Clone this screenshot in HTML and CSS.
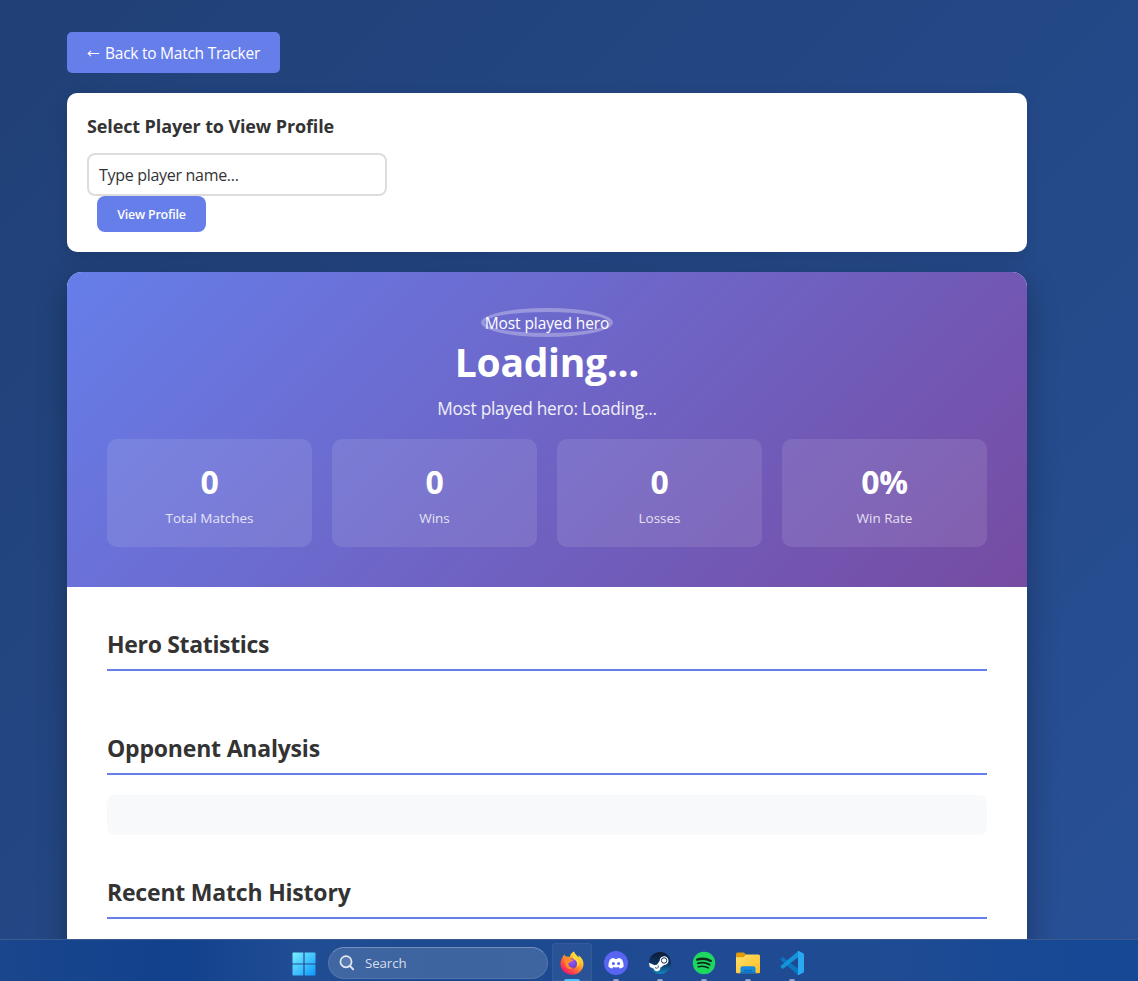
FILE: index.html
```html
<!DOCTYPE html>
<html lang="en">
<head>
<meta charset="utf-8">
<title>Player Profile</title>
<link rel="stylesheet" href="styles.css">
</head>
<body>
<div class="desktop">
  <main class="page">
    <a class="back"><svg class="arrow" width="13" height="10" viewBox="0 0 13 10"><path d="M12.2 5.5H1.2M4 2.8L1.2 5.5L4 8.2" fill="none" stroke="#fff" stroke-width="1.1"/></svg><span>Back to Match Tracker</span></a>
    <section class="card picker">
      <h3>Select Player to View Profile</h3>
      <div class="field">Type player name...</div>
      <button class="view">View Profile</button>
    </section>
    <section class="profile">
      <header class="hero">
        <div class="avatar">Most played hero</div>
        <h1>Loading...</h1>
        <p class="sub">Most played hero: Loading...</p>
        <div class="stats">
          <div class="stat"><b>0</b><span>Total Matches</span></div>
          <div class="stat"><b>0</b><span>Wins</span></div>
          <div class="stat"><b>0</b><span>Losses</span></div>
          <div class="stat"><b>0%</b><span>Win Rate</span></div>
        </div>
      </header>
      <div class="content">
        <h2 class="h-stats">Hero Statistics</h2>
        <h2 class="h-opp">Opponent Analysis</h2>
        <div class="empty"></div>
        <h2 class="h-recent">Recent Match History</h2>
      </div>
    </section>
  </main>
  <footer class="taskbar">
    <svg class="start" width="24" height="24" viewBox="0 0 24 24">
      <defs><linearGradient id="win" x1="0" y1="0" x2="24" y2="24" gradientUnits="userSpaceOnUse"><stop offset="0" stop-color="#7cf3ff"/><stop offset="1" stop-color="#0a94fb"/></linearGradient></defs>
      <path fill="url(#win)" d="M1.2 .5H11.4V11.4H.5V1.2Q.5 .5 1.2 .5M12.6 .5H22.8Q23.5 .5 23.5 1.2V11.4H12.6ZM.5 12.6H11.4V23.5H1.2Q.5 23.5 .5 22.8ZM12.6 12.6H23.5V22.8Q23.5 23.5 22.8 23.5H12.6Z"/>
    </svg>
    <div class="search">
      <svg width="16" height="16" viewBox="0 0 16 16"><circle cx="7" cy="6.7" r="5.6" fill="#ffffff22" stroke="#e4e9f1" stroke-width="1.7"/><path d="M11 11L14.2 14.3" stroke="#e4e9f1" stroke-width="1.9" stroke-linecap="round"/></svg>
      <span>Search</span>
    </div>
    <div class="apps">
      <div class="app active">
        <svg width="24" height="24" viewBox="0 0 24 24">
          <defs>
            <linearGradient id="ff" x1="20" y1="2" x2="5" y2="22" gradientUnits="userSpaceOnUse"><stop offset="0" stop-color="#fff04a"/><stop offset=".35" stop-color="#ffb52c"/><stop offset=".65" stop-color="#ff643a"/><stop offset="1" stop-color="#f5156c"/></linearGradient>
            <radialGradient id="ffp" cx=".5" cy=".3" r=".7"><stop offset="0" stop-color="#9059ff"/><stop offset="1" stop-color="#6a3bc4"/></radialGradient>
          </defs>
          <path fill="url(#ff)" d="M2 7.2C2.8 5.4 3.7 4.3 4.8 3.2C4.8 4.4 5.2 5.1 6 5.8C7.6 5 8.6 5.5 9.8 6C10 3.8 11.6 1.4 14 .4C14.3 3.2 17.2 4.4 18.4 6.8C18.7 6 18.6 5.1 18.2 4.3C21.6 6.1 23.6 9.6 23.5 13C23.3 19.2 18.3 23.7 12.1 23.7C5.9 23.7 .5 19.3 .5 12.8C.5 10.8 1 8.9 2 7.2Z"/>
          <circle cx="11.8" cy="12.6" r="5.3" fill="url(#ffp)"/>
          <path fill="#ff8a2c" d="M5.8 6.5C8 5.6 10 6.2 11.2 8.2L13.5 8.7C13.4 9.9 11.4 9.9 10.9 10.8C10.3 11.4 9.2 11.6 8.4 12.4C8.4 15.2 10.8 17 13.7 16.8C11 19.4 5.4 17.8 5.2 12.5C4.5 10.1 4.8 8 5.8 6.5Z"/>
          <path fill="#ffd83d" d="M14 .4C14.3 3.2 18.4 4.8 19 9.2C19.5 12 18.9 15 17 16.7C18.2 12.7 16.4 9.2 14 8.6C12.5 6.5 12.2 3.1 14 .4Z"/>
        </svg><i></i>
      </div>
      <div class="app">
        <svg width="24" height="24" viewBox="0 0 24 24"><circle cx="12" cy="12" r="12" fill="#5865f2"/><path fill="#fff" d="M10.2 6.9C8.9 7 7.6 7.3 6.5 7.9C4.8 10.3 4.2 13 4.4 15.7C5.7 16.7 7 17.2 8.3 17.4L9.2 16C11 16.5 13 16.5 14.8 16L15.7 17.4C17 17.2 18.3 16.7 19.6 15.7C19.8 13 19.2 10.3 17.5 7.9C16.4 7.3 15.1 7 13.8 6.9L13.3 7.9H10.7Z"/><ellipse cx="9.4" cy="12.6" rx="1.5" ry="1.65" fill="#5865f2"/><ellipse cx="14.6" cy="12.6" rx="1.5" ry="1.65" fill="#5865f2"/></svg><i></i>
      </div>
      <div class="app">
        <svg width="24" height="24" viewBox="0 0 24 24">
          <defs><linearGradient id="st" x1="0" y1="0" x2="0" y2="1"><stop offset="0" stop-color="#111b35"/><stop offset=".55" stop-color="#0b3567"/><stop offset="1" stop-color="#1489bd"/></linearGradient></defs>
          <path fill="url(#st)" d="M1.2 10C2.1 4.6 6.6 1 12 1C18.1 1 23 5.9 23 12S18.1 23 12 23C7.2 23 3.2 20 1.7 15.8Z"/>
          <path fill="#fff" d="M.9 11.7L7 14.2C7.7 13.8 8.3 13.7 9 13.7L11.7 9.8A4.4 4.4 0 1 1 16.1 14L12.3 16.8A3.3 3.3 0 0 1 5.8 17.8L1.8 16.1Z"/>
          <circle cx="16.1" cy="9.5" r="2.7" fill="none" stroke="#15305a" stroke-width="1"/><path d="M7 16.6L8.5 17.2A1.7 1.7 0 0 0 10 14.4" fill="none" stroke="#15406f" stroke-width=".9"/>
        </svg><i></i>
      </div>
      <div class="app">
        <svg width="24" height="24" viewBox="0 0 24 24"><circle cx="12" cy="12" r="11.2" fill="#1ed760"/><g fill="none" stroke="#10281a" stroke-linecap="round"><path d="M5.2 8.6C9.5 7.3 14.7 7.7 18.8 9.9" stroke-width="2.3"/><path d="M5.8 12.3C9.8 11.2 14 11.6 17.6 13.6" stroke-width="1.9"/><path d="M6.3 15.7C9.8 14.8 13.3 15.1 16.4 16.9" stroke-width="1.6"/></g></svg><i></i>
      </div>
      <div class="app">
        <svg width="24" height="24" viewBox="0 0 24 24">
          <defs><linearGradient id="fo" x1="0" y1="0" x2="1" y2="1"><stop offset="0" stop-color="#ffe06d"/><stop offset="1" stop-color="#ffbd20"/></linearGradient></defs>
          <path fill="#dc9b0a" d="M0 3Q0 1.5 1.5 1.5H8L10.4 4H12V8H0Z"/><path fill="url(#fo)" d="M0 6.2H7.5L10.2 3.5H22.5Q24 3.5 24 5V21Q24 22.2 22.8 22.2H1.2Q0 22.2 0 21Z"/>
          <path fill="#1489dc" d="M4.5 22.2V17.3Q4.5 15.2 6.6 15.2H17.4Q19.5 15.2 19.5 17.3V22.2Z"/><path fill="#0962b5" d="M8 19.2H16V20.3H8ZM4.5 21.5H19.5V22.5H4.5Z"/>
        </svg><i></i>
      </div>
      <div class="app">
        <svg width="24" height="24" viewBox="0 0 24 24"><path fill="#0877bf" d="M.6 8.1L2.1 6.6Q2.7 6.1 3.4 6.6L18 17.8V23.9L.6 9.1Q0 8.6 .6 8.1Z"/><path fill="#1593d9" d="M.6 16L2.1 17.4Q2.7 17.9 3.4 17.4L18 6.2V.2L.6 15Q0 15.5 .6 16Z"/><path fill="#29a9f2" d="M17.3 .2L18.7 0L23.2 2.2Q24 2.6 24 3.5V20.5Q24 21.4 23.2 21.8L18.6 24L17.3 23.7Q18 23.3 18 22.3V1.6Q18 .7 17.3 .2Z"/></svg><i></i>
      </div>
    </div>
  </footer>
</div>
</body>
</html>
```
FILE: styles.css
```css
* { box-sizing: border-box; margin: 0; padding: 0; }
body {
  font-family: "Open Sans", "Noto Sans", sans-serif;
  color: #333;
  overflow: hidden;
}
.desktop {
  height: 981px;
  display: flex;
  flex-direction: column;
  background: linear-gradient(135deg, #204076 0%, #285096 100%);
}
.page {
  flex: 1;
  min-height: 0;
  overflow: hidden;
  display: flex;
  flex-direction: column;
  align-items: flex-start;
  padding: 32px 111px 0 67px;
}
.back {
  flex: none;
  display: flex;
  align-items: center;
  gap: 5px;
  height: 41px;
  padding: 0 0 0 20px;
  width: 213px;
  border-radius: 5px;
  background: #667eea;
  color: #fff;
  font-size: 15.5px;
  white-space: nowrap;
  letter-spacing: -0.25px;
}
.card {
  flex: none;
  width: 960px;
  height: 159px;
  margin-top: 20px;
  padding: 20px;
  background: #fff;
  border-radius: 10px;
  box-shadow: 0 5px 15px rgba(0, 0, 0, 0.1);
}
.picker h3 {
  font-size: 18px;
  line-height: 26px;
  letter-spacing: -0.12px;
  white-space: nowrap;
}
.field {
  width: 300px;
  height: 43px;
  margin-top: 14px;
  padding-left: 10px;
  border: 2px solid #ddd;
  border-radius: 8px;
  font-size: 16px;
  line-height: 41px;
  letter-spacing: -0.3px;
}
.view {
  display: block;
  width: 109px;
  height: 36px;
  margin-left: 10px;
  border: 0;
  border-radius: 8px;
  background: #667eea;
  color: #fff;
  font: 600 12.5px "Open Sans", "Noto Sans", sans-serif;
  letter-spacing: -0.25px;
}
.profile {
  flex: none;
  width: 960px;
  height: 800px;
  margin-top: 20px;
  background: #fff;
  border-radius: 15px;
  overflow: hidden;
  box-shadow: 0 10px 30px rgba(0, 0, 0, 0.3);
}
.hero {
  height: 315px;
  padding: 36px 40px 40px;
  display: flex;
  flex-direction: column;
  align-items: center;
  background: linear-gradient(135deg, #667eea 0%, #764ba2 100%);
  color: #fff;
}
.avatar {
  width: 132px;
  height: 29px;
  border: 4px solid rgba(255, 255, 255, 0.3);
  border-radius: 50%;
  display: flex;
  justify-content: center;
  font-size: 15.5px;
  line-height: 23px;
  white-space: nowrap;
  letter-spacing: -0.1px;
}
.hero h1 {
  font-size: 39px;
  line-height: 50px;
  letter-spacing: -0.3px;
}
.sub {
  margin-top: 7px;
  font-size: 17.3px;
  line-height: 30px;
  letter-spacing: -0.27px;
  opacity: 0.9;
}
.stats {
  width: 100%;
  margin-top: 15px;
  display: grid;
  grid-template-columns: repeat(4, 1fr);
  gap: 20px;
}
.stat {
  height: 108px;
  padding-top: 21px;
  border-radius: 10px;
  background: rgba(255, 255, 255, 0.1);
  display: flex;
  flex-direction: column;
  align-items: center;
}
.stat b { font-size: 32px; line-height: 43px; letter-spacing: -0.2px; }
.stat span { margin-top: 5px; font-size: 13.5px; line-height: 20px; opacity: 0.8; }
.content { padding: 40px; }
.content h2 {
  height: 44px;
  border-bottom: 2px solid #667eea;
  font-size: 23px;
  line-height: 35px;
  letter-spacing: -0.2px;
}
.content .h-stats { letter-spacing: -0.33px; }
.h-opp { margin-top: 60px; }
.empty { height: 40px; margin-top: 20px; border-radius: 8px; background: #f8f9fa; }
.h-recent { margin-top: 40px; }
.taskbar {
  flex: none;
  position: relative;
  height: 42px;
  padding-left: 291.5px;
  display: flex;
  align-items: center;
  border-top: 1px solid #3a5a90;
  background: linear-gradient(90deg, #19468c 0, #12418d 180px, #204d94 300px, #1c498f 440px, #204b94 700px, #1f4b93 880px, #154895 1100px);
}
.start { margin-top: 6px; }
.search {
  width: 220px;
  height: 32px;
  margin: 5px 4px 0 12.5px;
  padding-left: 10px;
  display: flex;
  align-items: center;
  gap: 10px;
  border: 1px solid rgba(255, 255, 255, 0.1);
  border-top-color: rgba(255, 255, 255, 0.28);
  border-radius: 16px;
  background: rgba(255, 255, 255, 0.15);
  color: #d5dded;
  font-size: 13.3px;
  letter-spacing: -0.1px;
}
.apps { display: flex; gap: 4px; align-self: flex-end; }
.app {
  width: 40px;
  height: 38px;
  display: flex;
  flex-direction: column;
  align-items: center;
  padding-top: 7.5px;
  border-radius: 4px 4px 0 0;
}
.app.active { background: rgba(255, 255, 255, 0.05); box-shadow: inset 0 0 0 1px rgba(255, 255, 255, 0.05); }
.app svg { flex: none; }
.app i {
  width: 6px;
  height: 2.5px;
  margin-top: 4px;
  border-radius: 2px 2px 0 0;
  background: #99a8c8;
}
.app.active i { width: 16px; background: #4cc2ff; }
```
